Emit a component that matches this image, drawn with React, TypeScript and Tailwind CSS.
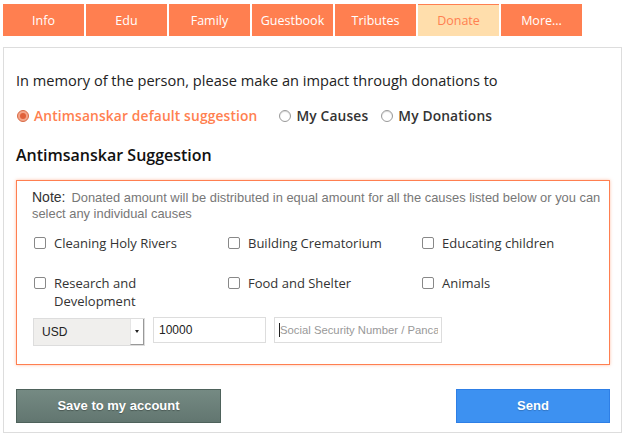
import React from "react";

const tabs = ["Info", "Edu", "Family", "Guestbook", "Tributes", "Donate", "More..."];

const causes = [
  "Cleaning Holy Rivers",
  "Building Crematorium",
  "Educating children",
  "Research and Development",
  "Food and Shelter",
  "Animals",
];

function Radio({ checked, label }: { checked?: boolean; label: string }) {
  return (
    <label className="flex items-center gap-[5px]">
      {checked ? (
        <span className="w-[12px] h-[12px] rounded-full bg-[#f4a58a] border border-[#d86a45] flex items-center justify-center">
          <span className="w-[6px] h-[6px] rounded-full bg-[#e0603a]" />
        </span>
      ) : (
        <span className="w-[12px] h-[12px] rounded-full bg-white border border-[#999] shadow-[inset_0_1px_1px_rgba(0,0,0,0.15)]" />
      )}
      <span className={`text-[13.8px] font-semibold tracking-[0.14px] ${checked ? "text-[#ff8050]" : "text-[#333]"}`}>{label}</span>
    </label>
  );
}

export default function App() {
  return (
    <div className="w-[630px] h-[440px] bg-white font-['Open_Sans',sans-serif] overflow-hidden">
      {/* tabs */}
      <div className="flex gap-[2px] pl-[3px] pt-[4px]">
        {tabs.map((t) => (
          <div
            key={t}
            className={`w-[81px] h-[32px] flex items-center justify-center pt-[2px] text-[12.5px] ${
              t === "Donate"
                ? "bg-[#ffdeac] text-[#ff8050] border-t border-[#ff7f50]"
                : "bg-[#ff7f50] text-white"
            }`}
          >
            {t}
          </div>
        ))}
      </div>

      {/* panel */}
      <div className="ml-[3px] mt-[11px] w-[619px] border border-[#dddddd] px-[12px] pt-[22px] pb-[9px]">
        <p className="text-[14.6px] leading-[20px] text-[#222]">
          In memory of the person, please make an impact through donations to
        </p>

        <div className="flex items-center gap-[22px] mt-[16px] h-[20px] pl-px">
          <Radio checked label="Antimsanskar default suggestion" />
          <div className="flex items-center gap-[13px]">
            <Radio label="My Causes" />
            <Radio label="My Donations" />
          </div>
        </div>

        <h3 className="mt-[18px] text-[16px] leading-[22px] font-semibold text-[#111]">Antimsanskar Suggestion</h3>

        <div className="mt-[14px] w-[594px] border border-[#ff7f50] shadow-[0_0_3px_rgba(255,127,80,0.5)] pl-[15px] pr-[4px] pt-[8px] pb-[18px]">
          <p className="font-['Liberation_Sans',Arial,sans-serif] text-[12.9px] leading-[16px] text-[#777]">
            <span className="text-[14px] leading-[16px] text-[#333] mr-[6px]">Note:</span>Donated amount will be distributed in equal amount for all the causes listed below or you can select any individual causes
          </p>

          <div className="grid grid-cols-[194px_194px_170px] gap-y-[22px] mt-[12px] pl-[2px]">
            {causes.map((c) => (
              <label key={c} className="flex items-start gap-[8px] text-[13px] leading-[18px] text-[#333]">
                <span className="mt-[3px] shrink-0 w-[12px] h-[12px] rounded-[2px] border border-[#888] bg-white" />
                <span className={c === "Research and Development" ? "w-[100px]" : ""}>{c}</span>
              </label>
            ))}
          </div>

          <div className="flex items-start gap-[8px] mt-[7px] pl-px font-['Liberation_Sans',Arial,sans-serif] text-[12px]">
            <div className="w-[112px] h-[28px] mt-px bg-[#f0efed] border border-[#dddddd] flex items-center justify-between">
              <span className="pl-[8px] text-[#222]">USD</span>
              <span className="w-[14px] h-full bg-white border-l border-r border-b border-[#999] border-l-[#e5e5e5] flex items-center justify-center">
                <span className="w-0 h-0 border-l-[2px] border-r-[2px] border-t-[3px] border-l-transparent border-r-transparent border-t-[#222]" />
              </span>
            </div>
            <div className="w-[113px] h-[26px] border border-[#dddddd] flex items-center pl-[5px] text-[#222]">10000</div>
            <div className="w-[168px] h-[26px] border border-[#dddddd] flex items-center pl-[4px]">
              <span className="w-px h-[14px] bg-[#222] shrink-0" />
              <input
                readOnly
                placeholder="Social Security Number / Pancard"
                className="w-[158px] bg-transparent outline-none text-[11.3px] placeholder:text-[#999]"
              />
            </div>
          </div>
        </div>

        <div className="flex justify-between mt-[24px] w-[594px] font-['Liberation_Sans',Arial,sans-serif]">
          <button className="w-[205px] h-[34px] bg-gradient-to-b from-[#758a83] to-[#627670] border border-[#4e625b] text-white text-[13px] font-bold [text-shadow:0_1px_1px_rgba(0,0,0,0.3)]">
            Save to my account
          </button>
          <button className="w-[154px] h-[34px] bg-[#3d91f1] border border-[#2e7fe6] text-white text-[13px] font-bold [text-shadow:0_1px_1px_rgba(0,0,0,0.2)]">
            Send
          </button>
        </div>
      </div>
    </div>
  );
}
